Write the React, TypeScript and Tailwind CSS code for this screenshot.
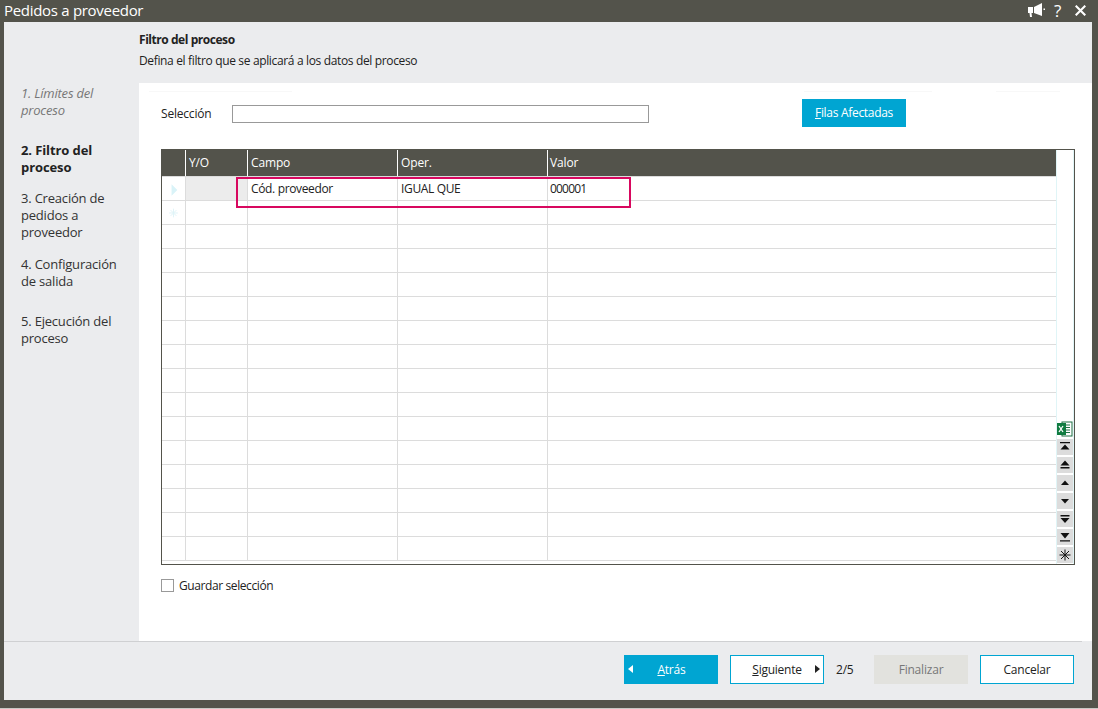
import React from "react";

const font = { fontFamily: '"Open Sans", "Noto Sans", sans-serif' };

const columnWidths = ["w-[24px]", "w-[62px]", "w-[150px]", "w-[150px]", "flex-1"];

const ScrollIcon = ({ d }: { d: string }) => (
  <svg width="12" height="12" viewBox="0 0 12 12" fill="#111">
    <path d={d} />
  </svg>
);

const scrollIcons = [
  "M1 1h10v1.2H1zM6 3.500l4.500 5h-9z",
  "M6 1.500l4.500 5h-9zM1.500 8h9v1.400h-9z",
  "M6 3.500l4 4.500H2z",
  "M2 4h8L6 8.500z",
  "M1.500 2h9v1.400h-9zM1.500 5h9L6 10z",
  "M1.500 2h9L6 7.500zM1 9.200h10v1.200H1z",
];

const Row = ({ index }: { index: number }) => (
  <div className="flex h-[24px] border-b border-[#dcdcdc] box-border">
    {columnWidths.map((w, i) => (
      <div
        key={i}
        className={`${w} flex items-center box-border text-[12px] text-[#222] tracking-[-0.35px] ${
          i < 4 ? "border-r border-[#dcdcdc]" : ""
        } ${index === 0 && i === 1 ? "bg-[#ececec]" : ""} ${i >= 2 ? "pl-[3px]" : ""}`}
      >
        {i === 0 && index === 0 && (
          <svg width="24" height="24" viewBox="0 0 24 24" fill="#d9f3f8">
            <path d="M10 7l6 6-6 6z" />
          </svg>
        )}
        {i === 0 && index === 1 && (
          <svg width="24" height="24" viewBox="0 0 24 24" stroke="#dff4f8" strokeWidth="1">
            <path d="M12 7.500v9M7.500 12h9M9 9l6 6M15 9l-6 6" />
          </svg>
        )}
        {index === 0 && i === 2 && "Cód. proveedor"}
        {index === 0 && i === 3 && "IGUAL QUE"}
        {index === 0 && i === 4 && <span className="-ml-[1px] tracking-[-0.8px]">000001</span>}
      </div>
    ))}
  </div>
);

export default function App() {
  return (
    <div className="relative w-[1098px] h-[709px] overflow-hidden bg-[#53534b] flex flex-col" style={font}>
      <div className="h-[22px] flex items-center justify-between shrink-0 pl-[4px] pr-[12px] pb-[2px]">
        <span className="text-[15px] text-white leading-none tracking-[-0.3px]">Pedidos a proveedor</span>
        <div className="flex items-center text-white">
          <svg width="17" height="15" viewBox="0 0 17 15" fill="#fff">
            <path d="M0 4h5v6H3.500l.5 4H2l-.5-4H0zM6 4l8-4v13l-8-3zM15.500 5.500H17v1.500h-1.500z" />
          </svg>
          <span className="ml-[9px] text-[17px] leading-none w-[8px]">?</span>
          <svg width="11" height="11" viewBox="0 0 11 11" stroke="#fff" strokeWidth="2.100" className="ml-[13px]">
            <path d="M.7.700l9.600 9.600M10.300.700L.7 10.300" />
          </svg>
        </div>
      </div>

      <div className="ml-[4px] w-[1088px] h-[678px] bg-[#ebecee] flex flex-col">
        <div className="h-[61px] pl-[135px] pt-[9px] shrink-0 text-[#222]">
          <div className="text-[12px] font-bold leading-[18px] tracking-[-0.45px]">Filtro del proceso</div>
          <div className="text-[12px] leading-[18px] mt-[3px] tracking-[-0.35px]">
            Defina el filtro que se aplicará a los datos del proceso
          </div>
        </div>

        <div className="flex flex-1 min-h-0">
          <div className="w-[135px] shrink-0 pl-[17px] pt-[2px] text-[13px] leading-[17px] text-[#333] tracking-[-0.2px]">
            <div className="italic text-[#777] h-[47px]">
              1. Límites del
              <br />
              proceso
            </div>
            <div className="font-bold text-[#222] mt-[10px] tracking-[-0.1px]">
              2. Filtro del
              <br />
              proceso
            </div>
            <div className="mt-[14px]">
              3. Creación de
              <br />
              pedidos a
              <br />
              proveedor
            </div>
            <div className="mt-[15px]">
              4. Configuración
              <br />
              de salida
            </div>
            <div className="mt-[23px]">
              5. Ejecución del
              <br />
              proceso
            </div>
          </div>

          <div className="relative flex-1 bg-white pl-[22px] pr-[17px] pt-[16px]">
            <div className="absolute left-[10px] top-[8px] w-[143px] h-[1px] bg-[#f8f8f8]" />
            <div className="absolute left-[665px] top-[8px] w-[128px] h-[1px] bg-[#f8f8f8]" />
            <div className="absolute left-[857px] top-[8px] w-[64px] h-[1px] bg-[#f8f8f8]" />

            <div className="flex items-start h-[50px]">
              <span className="w-[71px] text-[12px] text-[#222] pt-[6px] leading-[18px] tracking-[-0.2px]">Selección</span>
              <div className="w-[417px] h-[18px] mt-[6px] border border-[#999] box-border" />
              <button className="ml-[153px] w-[104px] h-[28px] bg-[#00a5d2] text-white text-[12px] tracking-[-0.3px]">
                <u>F</u>ilas Afectadas
              </button>
            </div>

            <div className="relative h-[416px] border border-[#53534b] box-border flex">
              <div className="flex-1 min-w-0">
                <div className="flex h-[27px] bg-[#53534b] border-b border-[#dcdcdc] box-border">
                  {["", "Y/O", "Campo", "Oper.", "Valor"].map((h, i) => (
                    <div
                      key={i}
                      className={`${columnWidths[i]} box-border flex items-center text-[12px] text-white tracking-[-0.15px] ${
                        i < 4 ? "border-r border-white pl-[3px]" : "pl-[2px]"
                      }`}
                    >
                      {h}
                    </div>
                  ))}
                </div>
                {Array.from({ length: 16 }).map((_, i) => (
                  <Row key={i} index={i} />
                ))}
              </div>

              <div className="w-[18px] shrink-0 border-l border-r border-[#e0f5f7] box-border flex flex-col items-center pt-[272px] gap-[2px]">
                <svg width="16" height="16" viewBox="0 0 16 16" className="-ml-[1px] -mt-[1px]">
                  <rect x="5" y="1" width="10" height="14" fill="#fff" stroke="#1e7145" />
                  <path d="M9 4h4M9 6.500h4M9 9h4M9 11.500h4" stroke="#1e7145" />
                  <rect x="0" y="2" width="9" height="12" fill="#107c41" />
                  <path d="M2 5l4 6M6 5l-4 6" stroke="#fff" strokeWidth="1.300" />
                </svg>
                {scrollIcons.map((d) => (
                  <div key={d} className="w-[16px] h-[16px] bg-[#dcdcdc] flex items-center justify-center">
                    <ScrollIcon d={d} />
                  </div>
                ))}
                <div className="w-[16px] h-[16px] bg-[#dcdcdc] flex items-center justify-center">
                  <svg width="12" height="12" viewBox="0 0 12 12" stroke="#111" strokeWidth="1">
                    <path d="M6 .5v11M.5 6h11M2 2l8 8M10 2l-8 8" />
                  </svg>
                </div>
              </div>

              <div className="absolute left-[74px] top-[27px] w-[395px] h-[31px] border-2 border-[#d8085f] box-border pointer-events-none" />
            </div>

            <div className="flex items-center mt-[14px] h-[13px]">
              <div className="w-[13px] h-[13px] border border-[#999] box-border" />
              <span className="ml-[5px] text-[12px] text-[#222] tracking-[-0.4px]">Guardar selección</span>
            </div>
          </div>
        </div>

        <div className="h-[1px] w-[1078px] bg-[#cfd0d2] shrink-0" />
        <div className="h-[58px] shrink-0 flex items-center pl-[620px] pb-[3px] text-[12px] text-[#222] tracking-[-0.2px]">
          <button className="relative w-[94px] h-[29px] bg-[#00a5d2] text-white text-[12px] tracking-[-0.2px]">
            <svg width="5" height="8" viewBox="0 0 5 8" fill="#fff" className="absolute left-[4px] top-[10px]">
              <path d="M5 0v8L0 4z" />
            </svg>
            <span className="ml-[1px]"><u>A</u>trás</span>
          </button>
          <button className="relative ml-[12px] w-[94px] h-[29px] bg-white border border-[#00a5d2] box-border text-[12px] tracking-[-0.25px]">
            <u>S</u>iguiente
            <svg width="5" height="8" viewBox="0 0 5 8" fill="#222" className="absolute right-[3px] top-[9px]">
              <path d="M0 0v8l5-4z" />
            </svg>
          </button>
          <span className="ml-[12px] w-[38px]">2/5</span>
          <button className="w-[94px] h-[29px] bg-[#e2e2de] text-[#777] text-[12px] tracking-[-0.2px]">Finalizar</button>
          <button className="ml-[12px] w-[94px] h-[29px] bg-white border border-[#00a5d2] box-border text-[12px] tracking-[-0.2px]">
            Cancelar
          </button>
        </div>
      </div>

      <div className="mt-auto h-[1px] bg-[#c8c8c4] shrink-0" />
    </div>
  );
}
